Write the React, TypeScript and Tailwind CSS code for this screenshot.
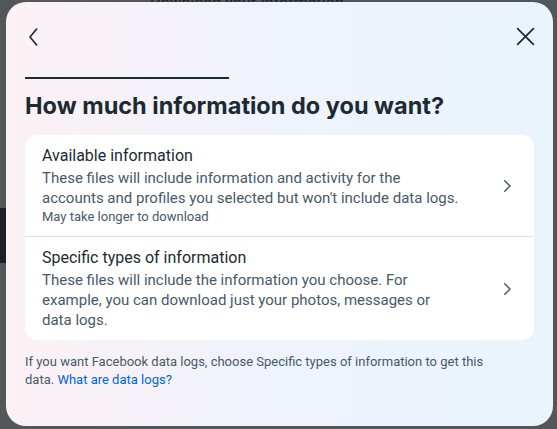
function Chevron({ className }: { className?: string }) {
  return (
    <svg className={className} viewBox="0 0 24 24" fill="none" stroke="currentColor" strokeWidth="2" strokeLinecap="round" strokeLinejoin="round">
      <path d="M9 5l7 7-7 7" />
    </svg>
  );
}

function Option({ title, lines, note }: { title: string; lines: string[]; note?: string }) {
  return (
    <div className="flex items-center pl-[17px] pr-[18px]">
      <div className="flex-1">
        <div className="text-[16px] leading-[21px] text-[#1c2b33]">{title}</div>
        <div className="mt-[2px] text-[15px] leading-[20px] text-[#465a69]">
          {lines.map((l) => (
            <div key={l} className="whitespace-nowrap">{l}</div>
          ))}
        </div>
        {note && <div className="text-[13px] leading-[18px] text-[#465a69]">{note}</div>}
      </div>
      <Chevron className="h-[18px] w-[18px] text-[#465a69]" />
    </div>
  );
}

export default function App() {
  return (
    <div className="relative h-[429px] w-[557px] overflow-hidden bg-[#54575a] font-['Roboto',sans-serif]">
      <div className="absolute left-[150px] top-[-9px] text-[16px] font-medium text-[#1c2b33]">Download your information</div>
      <div className="absolute left-0 top-[208px] h-[55px] w-[8px] bg-[#1b2227]" />
      <div className="absolute left-0 top-0 h-[429px] w-[557px] pl-[6px] pt-[2px]">
        <div className="flex h-[424px] w-[547px] flex-col rounded-[20px] bg-gradient-to-r from-[#fcf1f5] via-[#eff3fc] to-[#eaf4fd] px-[19px]">
          <div className="flex items-center justify-between pt-[24px]">
            <svg className="h-[20px] w-[20px] text-[#1c2b33]" viewBox="0 0 24 24" fill="none" stroke="currentColor" strokeWidth="2" strokeLinecap="round" strokeLinejoin="round">
              <path d="M14 2.5l-8 9.5 8 9.5" />
            </svg>
            <svg className="mr-[-2px] h-[21px] w-[21px] text-[#1c2b33]" viewBox="0 0 24 24" fill="none" stroke="currentColor" strokeWidth="2" strokeLinecap="round">
              <path d="M3 3l18 18M21 3L3 21" />
            </svg>
          </div>
          <div className="mt-[30px] h-[2px] w-[204px] bg-[#1c2b33]" />
          <h1 className="mt-[12px] font-['Inter',sans-serif] text-[23.5px] font-bold leading-[30px] text-[#1c2b33]">How much information do you want?</h1>
          <div className="mt-[14px] rounded-[12px] bg-white">
            <div className="pb-[10px] pt-[10px]">
              <Option
                title="Available information"
                lines={[
                  "These files will include information and activity for the",
                  "accounts and profiles you selected but won't include data logs.",
                ]}
                note="May take longer to download"
              />
            </div>
            <div className="h-px bg-[#dde3e8]" />
            <div className="pb-[10px] pt-[10px]">
              <Option
                title="Specific types of information"
                lines={[
                  "These files will include the information you choose. For",
                  "example, you can download just your photos, messages or",
                  "data logs.",
                ]}
              />
            </div>
          </div>
          <p className="mt-[13px] text-[13px] leading-[18px] text-[#465a69]">
            If you want Facebook data logs, choose Specific types of information to get this
            <br />
            data. <span className="text-[#0064e0]">What are data logs?</span>
          </p>
        </div>
      </div>
    </div>
  );
}
